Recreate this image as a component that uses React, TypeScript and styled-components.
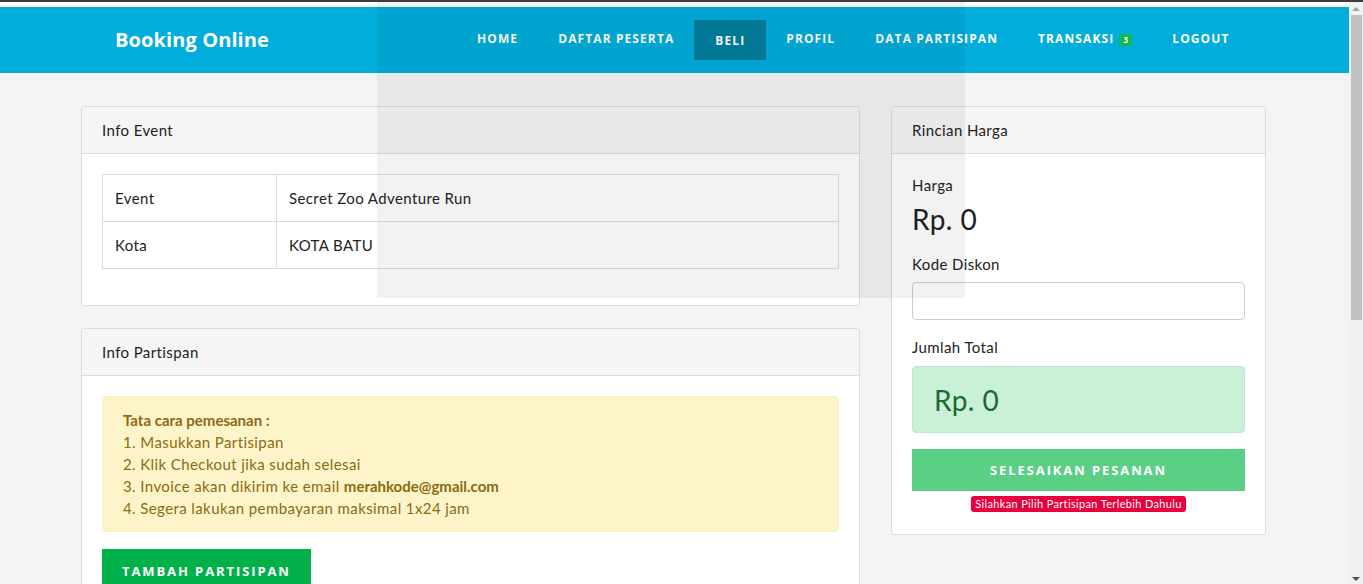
import React from "react";
import styled, { createGlobalStyle } from "styled-components";

const Global = createGlobalStyle`
  html, body { margin: 0; padding: 0; }
  body {
    background: #f4f4f4;
    font-family: "Lato", "Noto Sans", sans-serif;
    color: #333;
    overflow: hidden;
  }
  * { box-sizing: border-box; }
`;

const Window = styled.div`
  width: 1363px;
  height: 584px;
  display: flex;
  flex-direction: column;
  position: relative;
  overflow: hidden;
`;

const ChromeLine = styled.div`
  height: 2px;
  background: #3c3c3c;
  flex: none;
`;

const Viewport = styled.div`
  flex: 1;
  display: flex;
  min-height: 0;
`;

const Page = styled.div`
  flex: 1;
  background: #f4f4f4;
  display: flex;
  flex-direction: column;
  min-width: 0;
  overflow: hidden;
`;

const TopGap = styled.div`
  height: 5px;
  flex: none;
  background: #ffffff;
`;

const NavBar = styled.nav`
  height: 66px;
  flex: none;
  background: #00addb;
  display: flex;
  align-items: center;
  padding-left: 115px;
`;

const Brand = styled.div`
  font-family: "Open Sans", sans-serif;
  font-weight: 700;
  font-size: 20px;
  color: #fff;
  width: 342px;
  letter-spacing: 0.1px;
  padding-bottom: 2px;
`;

const NavList = styled.ul`
  list-style: none;
  margin: 0;
  padding: 0;
  display: flex;
  align-items: center;
`;

const NavItem = styled.li<{ $active?: boolean }>`
  height: 40px;
  display: flex;
  align-items: center;
  padding: 0 20px 3px;
  font-family: "Open Sans", sans-serif;
  font-weight: 700;
  font-size: 12px;
  letter-spacing: 1.1px;
  color: #fff;
  background: ${(p) => (p.$active ? "#007f9f" : "transparent")};
  ${(p) => (p.$active ? "padding: 0 21px 0;" : "")}
`;

const Badge = styled.span`
  display: inline-flex;
  align-items: center;
  justify-content: center;
  background: #0cb94a;
  color: #fff;
  font-size: 8px;
  font-weight: 700;
  width: 13px;
  height: 12px;
  border-radius: 3px;
  margin-left: 5px;
  letter-spacing: 0;
  margin-top: 2px;
`;

const Container = styled.div`
  width: 1185px;
  flex: none;
  margin: 33px 0 0 81px;
  display: flex;
  gap: 31px;
  align-items: flex-start;
  letter-spacing: 0.4px;
`;

const LeftCol = styled.div`
  width: 779px;
  display: flex;
  flex-direction: column;
  gap: 22px;
`;

const RightCol = styled.div`
  width: 375px;
`;

const Card = styled.section`
  background: #fff;
  border: 1px solid #dcdcdc;
  border-radius: 3px;
`;

const CardHeader = styled.div`
  height: 47px;
  background: #f5f5f5;
  border-bottom: 1px solid #dcdcdc;
  display: flex;
  align-items: center;
  padding: 0 20px;
  font-size: 15px;
  color: #222;
  border-radius: 3px 3px 0 0;
`;

const CardBody = styled.div`
  padding: 20px 20px 36px;
`;

const Table = styled.table`
  width: 100%;
  border-collapse: collapse;
  font-size: 15px;
  color: #222;
`;

const Cell = styled.td<{ $w?: number }>`
  border: 1px solid #dcdcdc;
  height: 47px;
  padding: 0 12px;
  width: ${(p) => (p.$w ? `${p.$w}px` : "auto")};
`;

const Alert = styled.div`
  background: #fdf5c9;
  border: 1px solid #fcefb5;
  border-radius: 4px;
  padding: 12px 20px 12px 20px;
  color: #8b6a12;
  font-size: 15px;
  line-height: 22px;
`;

const AlertTitle = styled.div`
  font-weight: 700;
  letter-spacing: 0;
`;

const Strong = styled.b`
  letter-spacing: 0;
`;

const GreenButton = styled.button<{ $light?: boolean; $full?: boolean }>`
  border: none;
  border-radius: 0;
  background: ${(p) => (p.$light ? "#5ccf87" : "#00b14a")};
  color: #fff;
  font-family: "Open Sans", sans-serif;
  font-weight: 700;
  font-size: 13px;
  letter-spacing: 1.9px;
  height: ${(p) => (p.$light ? "42px" : "44px")};
  padding: 0 20px;
  width: ${(p) => (p.$full ? "100%" : "auto")};
  display: block;
  cursor: pointer;
`;

const TambahWrap = styled.div`
  margin-top: 17px;
`;

const Label = styled.div<{ $mt?: number }>`
  font-size: 15px;
  color: #222;
  margin-top: ${(p) => p.$mt ?? 0}px;
`;

const Price = styled.div`
  font-size: 28px;
  color: #222;
  margin-top: 8px;
  line-height: 34px;
`;

const Input = styled.input`
  width: 100%;
  height: 38px;
  margin-top: 9px;
  border: 1px solid #c9ccd1;
  border-radius: 4px;
  background: #fff;
`;

const TotalBox = styled.div`
  margin-top: 10px;
  height: 67px;
  background: #caf0d8;
  border: 1px solid #b9e9cb;
  border-radius: 4px;
  color: #1a6a32;
  font-size: 28px;
  display: flex;
  align-items: center;
  padding-left: 21px;
`;

const RightBody = styled.div`
  padding: 22px 20px 22px;
`;

const ButtonWrap = styled.div`
  margin-top: 16px;
`;

const WarnRow = styled.div`
  display: flex;
  justify-content: center;
  margin-top: 5px;
`;

const Warn = styled.span`
  background: #e8003d;
  color: #fff;
  font-size: 11px;
  padding: 1px 4px 2px;
  border-radius: 3px;
  line-height: 13px;
  letter-spacing: 0.35px;
`;

const Scrollbar = styled.div`
  width: 14px;
  background: #f1f1f1;
  display: flex;
  flex-direction: column;
  align-items: center;
`;

const Arrow = styled.div<{ $down?: boolean }>`
  width: 0;
  height: 0;
  border-left: 4px solid transparent;
  border-right: 4px solid transparent;
  ${(p) =>
    p.$down
      ? "border-top: 4px solid #505050; margin-top: auto; margin-bottom: 3px;"
      : "border-bottom: 4px solid #a3a3a3; margin-top: 5px;"}
`;

const Thumb = styled.div`
  width: 11px;
  height: 305px;
  background: #c1c1c1;
  margin-top: 4px;
  margin-left: 1px;
`;

const Overlay = styled.div`
  position: absolute;
  left: 377px;
  top: 2px;
  width: 588px;
  height: 296px;
  background: rgba(0, 0, 0, 0.05);
  pointer-events: none;
`;

export default function App() {
  const nav = ["HOME", "DAFTAR PESERTA", "BELI", "PROFIL", "DATA PARTISIPAN", "TRANSAKSI", "LOGOUT"];
  return (
    <Window>
      <Global />
      <ChromeLine />
      <Viewport>
        <Page>
          <TopGap />
          <NavBar>
            <Brand>Booking Online</Brand>
            <NavList>
              {nav.map((n) => (
                <NavItem key={n} $active={n === "BELI"}>
                  {n}
                  {n === "TRANSAKSI" && <Badge>3</Badge>}
                </NavItem>
              ))}
            </NavList>
          </NavBar>
          <Container>
            <LeftCol>
              <Card>
                <CardHeader>Info Event</CardHeader>
                <CardBody>
                  <Table>
                    <tbody>
                      <tr>
                        <Cell $w={174}>Event</Cell>
                        <Cell>Secret Zoo Adventure Run</Cell>
                      </tr>
                      <tr>
                        <Cell $w={174}>Kota</Cell>
                        <Cell>KOTA BATU</Cell>
                      </tr>
                    </tbody>
                  </Table>
                </CardBody>
              </Card>
              <Card>
                <CardHeader>Info Partispan</CardHeader>
                <CardBody>
                  <Alert>
                    <AlertTitle>Tata cara pemesanan :</AlertTitle>
                    <div>1. Masukkan Partisipan</div>
                    <div>2. Klik Checkout jika sudah selesai</div>
                    <div>
                      3. Invoice akan dikirim ke email <Strong>merahkode@gmail.com</Strong>
                    </div>
                    <div>4. Segera lakukan pembayaran maksimal 1x24 jam</div>
                  </Alert>
                  <TambahWrap>
                    <GreenButton>TAMBAH PARTISIPAN</GreenButton>
                  </TambahWrap>
                </CardBody>
              </Card>
            </LeftCol>
            <RightCol>
              <Card>
                <CardHeader>Rincian Harga</CardHeader>
                <RightBody>
                  <Label>Harga</Label>
                  <Price>Rp. 0</Price>
                  <Label $mt={19}>Kode Diskon</Label>
                  <Input />
                  <Label $mt={18}>Jumlah Total</Label>
                  <TotalBox>Rp. 0</TotalBox>
                  <ButtonWrap>
                    <GreenButton $light $full>SELESAIKAN PESANAN</GreenButton>
                  </ButtonWrap>
                  <WarnRow>
                    <Warn>Silahkan Pilih Partisipan Terlebih Dahulu</Warn>
                  </WarnRow>
                </RightBody>
              </Card>
            </RightCol>
          </Container>
        </Page>
        <Scrollbar>
          <Arrow />
          <Thumb />
          <Arrow $down />
        </Scrollbar>
      </Viewport>
      <Overlay />
    </Window>
  );
}
